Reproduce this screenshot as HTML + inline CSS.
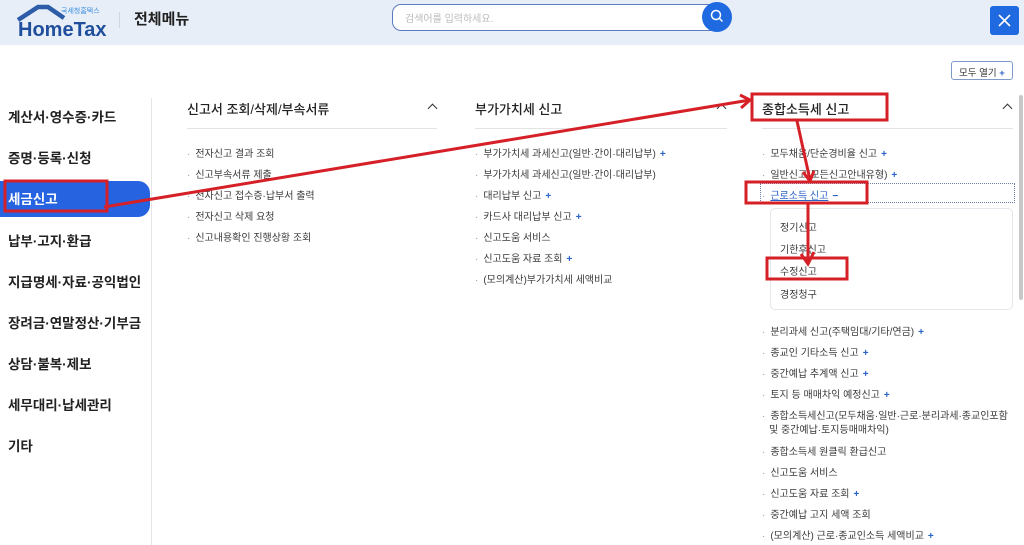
<!DOCTYPE html>
<html><head><meta charset="utf-8"><style>
*{margin:0;padding:0;box-sizing:border-box}
body{width:1024px;height:545px;overflow:hidden;background:#fff;font-family:"Liberation Sans","Noto Sans CJK KR",sans-serif;position:relative;color:#333}
.a{position:absolute;white-space:nowrap}
.hdr{position:absolute;left:0;top:0;width:1024px;height:45px;background:#e8eef8}
.side{font-size:13.5px;font-weight:700;color:#222;left:8px}
.h{font-size:13px;font-weight:500;color:#222}
.ln{position:absolute;height:1px;background:#e3e3e3}
.it{font-size:10px;color:#3a3a3a}
.it:before{content:"·";color:#999;margin-right:5px}
.p{color:#2a62c9;font-weight:700;margin-left:4px}
.chev{position:absolute;width:7px;height:7px;border-left:1.8px solid #333;border-top:1.8px solid #333;transform:rotate(45deg)}
.sub{font-size:10px;color:#3a3a3a}
</style></head><body>
<div class="hdr"></div>
<svg class="a" style="left:16px;top:3px" width="100" height="38" viewBox="0 0 100 38">
<path d="M2 17 L22 4 L32 4 L48 15" fill="none" stroke="#2d5da8" stroke-width="4.5" stroke-linejoin="round"/>
<text x="45" y="10" font-size="7" fill="#3a8ee0" font-family="Noto Sans CJK KR">국세청홈택스</text>
<text x="2" y="33" font-size="20" font-weight="700" fill="#1f4f9c" font-family="Liberation Sans">HomeTax</text>
</svg>
<div class="a" style="left:119px;top:12px;width:1px;height:16px;background:#cfd6e2"></div>
<div class="a" style="left:134px;top:8px;font-size:15px;font-weight:700;color:#222">전체메뉴</div>
<div class="a" style="left:392px;top:4px;width:330px;height:27px;border:1.5px solid #5b7bc0;border-radius:9px;background:#fff"></div>
<div class="a" style="left:405px;top:10px;font-size:10px;color:#bbb">검색어를 입력하세요.</div>
<div class="a" style="left:702px;top:2px;width:30px;height:30px;border-radius:50%;background:#1f6ae0"></div>
<svg class="a" style="left:709px;top:8px" width="16" height="16"><circle cx="7" cy="7" r="4.5" fill="none" stroke="#fff" stroke-width="1.5"/><path d="M10.5 10.5 L13.5 13.5" stroke="#fff" stroke-width="1.5"/></svg>
<div class="a" style="left:990px;top:6px;width:29px;height:29px;border-radius:3px;background:#1f6ae0"></div>
<svg class="a" style="left:997px;top:13px" width="15" height="15"><path d="M2 2L13 13M13 2L2 13" stroke="#fff" stroke-width="1.6"/></svg>

<div class="a" style="left:951px;top:61px;width:62px;height:19px;border:1px solid #7d9cc9;border-radius:3px;font-size:9.5px;color:#333;padding:3px 0 0 7px">모두 열기 <span style="color:#2a62c9;font-weight:700">+</span></div>

<div class="a" style="left:0;top:181px;width:150px;height:36px;background:#2563e0;border-radius:0 12px 12px 0"></div>
<div class="a side" style="top:106px">계산서·영수증·카드</div>
<div class="a side" style="top:147px">증명·등록·신청</div>
<div class="a side" style="top:188px;color:#fff">세금신고</div>
<div class="a side" style="top:230px">납부·고지·환급</div>
<div class="a side" style="top:271px">지급명세·자료·공익법인</div>
<div class="a side" style="top:312px">장려금·연말정산·기부금</div>
<div class="a side" style="top:353px">상담·불복·제보</div>
<div class="a side" style="top:394px">세무대리·납세관리</div>
<div class="a side" style="top:435px">기타</div>
<div class="a" style="left:151px;top:98px;width:1px;height:447px;background:#e5e5e5"></div>

<div class="a h" style="left:187px;top:99px">신고서 조회/삭제/부속서류</div>
<div class="chev" style="left:429px;top:105px"></div>
<div class="ln" style="left:187px;top:128px;width:250px"></div>
<div class="a it" style="left:187px;top:145px">전자신고 결과 조회</div>
<div class="a it" style="left:187px;top:166px">신고부속서류 제출</div>
<div class="a it" style="left:187px;top:187px">전자신고 접수증·납부서 출력</div>
<div class="a it" style="left:187px;top:208px">전자신고 삭제 요청</div>
<div class="a it" style="left:187px;top:229px">신고내용확인 진행상황 조회</div>

<div class="a h" style="left:475px;top:99px">부가가치세 신고</div>
<div class="chev" style="left:718px;top:105px"></div>
<div class="ln" style="left:475px;top:128px;width:252px"></div>
<div class="a it" style="left:475px;top:145px">부가가치세 과세신고(일반·간이·대리납부)<span class="p">+</span></div>
<div class="a it" style="left:475px;top:166px">부가가치세 과세신고(일반·간이·대리납부)</div>
<div class="a it" style="left:475px;top:187px">대리납부 신고<span class="p">+</span></div>
<div class="a it" style="left:475px;top:208px">카드사 대리납부 신고<span class="p">+</span></div>
<div class="a it" style="left:475px;top:229px">신고도움 서비스</div>
<div class="a it" style="left:475px;top:250px">신고도움 자료 조회<span class="p">+</span></div>
<div class="a it" style="left:475px;top:271px">(모의계산)부가가치세 세액비교</div>

<div class="a h" style="left:762px;top:99px">종합소득세 신고</div>
<div class="chev" style="left:1004px;top:105px"></div>
<div class="ln" style="left:762px;top:128px;width:251px"></div>
<div class="a it" style="left:762px;top:145px">모두채움/단순경비율 신고<span class="p">+</span></div>
<div class="a it" style="left:762px;top:166px">일반신고(모든신고안내유형)<span class="p">+</span></div>
<div class="a" style="left:760px;top:183px;width:255px;height:20px;border:1px dotted #6a7fa8"></div>
<div class="a it" style="left:762px;top:187px"><span style="color:#2a62c9;text-decoration:underline">근로소득 신고</span><span class="p">−</span></div>
<div class="a" style="left:770px;top:208px;width:243px;height:102px;border:1px solid #e3e6ea;border-radius:5px"></div>
<div class="a sub" style="left:780px;top:219px">정기신고</div>
<div class="a sub" style="left:780px;top:241px">기한후신고</div>
<div class="a sub" style="left:780px;top:263px">수정신고</div>
<div class="a sub" style="left:780px;top:286px">경정청구</div>
<div class="a it" style="left:762px;top:323px">분리과세 신고(주택임대/기타/연금)<span class="p">+</span></div>
<div class="a it" style="left:762px;top:344px">종교인 기타소득 신고<span class="p">+</span></div>
<div class="a it" style="left:762px;top:365px">중간예납 추계액 신고<span class="p">+</span></div>
<div class="a it" style="left:762px;top:386px">토지 등 매매차익 예정신고<span class="p">+</span></div>
<div class="a it" style="left:762px;top:407px">종합소득세신고(모두채움·일반·근로·분리과세·종교인포함</div>
<div class="a" style="left:769px;top:421px;font-size:10px;color:#3a3a3a">및 중간예납·토지등매매차익)</div>
<div class="a it" style="left:762px;top:443px">종합소득세 원클릭 환급신고</div>
<div class="a it" style="left:762px;top:464px">신고도움 서비스</div>
<div class="a it" style="left:762px;top:485px">신고도움 자료 조회<span class="p">+</span></div>
<div class="a it" style="left:762px;top:506px">중간예납 고지 세액 조회</div>
<div class="a it" style="left:762px;top:527px">(모의계산) 근로·종교인소득 세액비교<span class="p">+</span></div>

<div class="a" style="left:1019px;top:95px;width:4px;height:205px;background:#c8c8c8;border-radius:2px"></div>

<svg class="a" style="left:0;top:0" width="1024" height="545">
<g fill="none" stroke="#d62027" stroke-width="3">
<rect x="5" y="181" width="102" height="30"/>
<rect x="752" y="94" width="135" height="26"/>
<rect x="746" y="182" width="121" height="21"/>
<rect x="767" y="258" width="80" height="21"/>
<path d="M104 207 L750 100"/>
<path d="M740 95 L750 100 L741 108"/>
<path d="M797 121 L810 180"/>
<path d="M803 172 L810 181 L814 171"/>
<path d="M808 204 L808 262"/>
<path d="M801 254 L808 264 L814 252"/>
</g>
</svg>
</body></html>
